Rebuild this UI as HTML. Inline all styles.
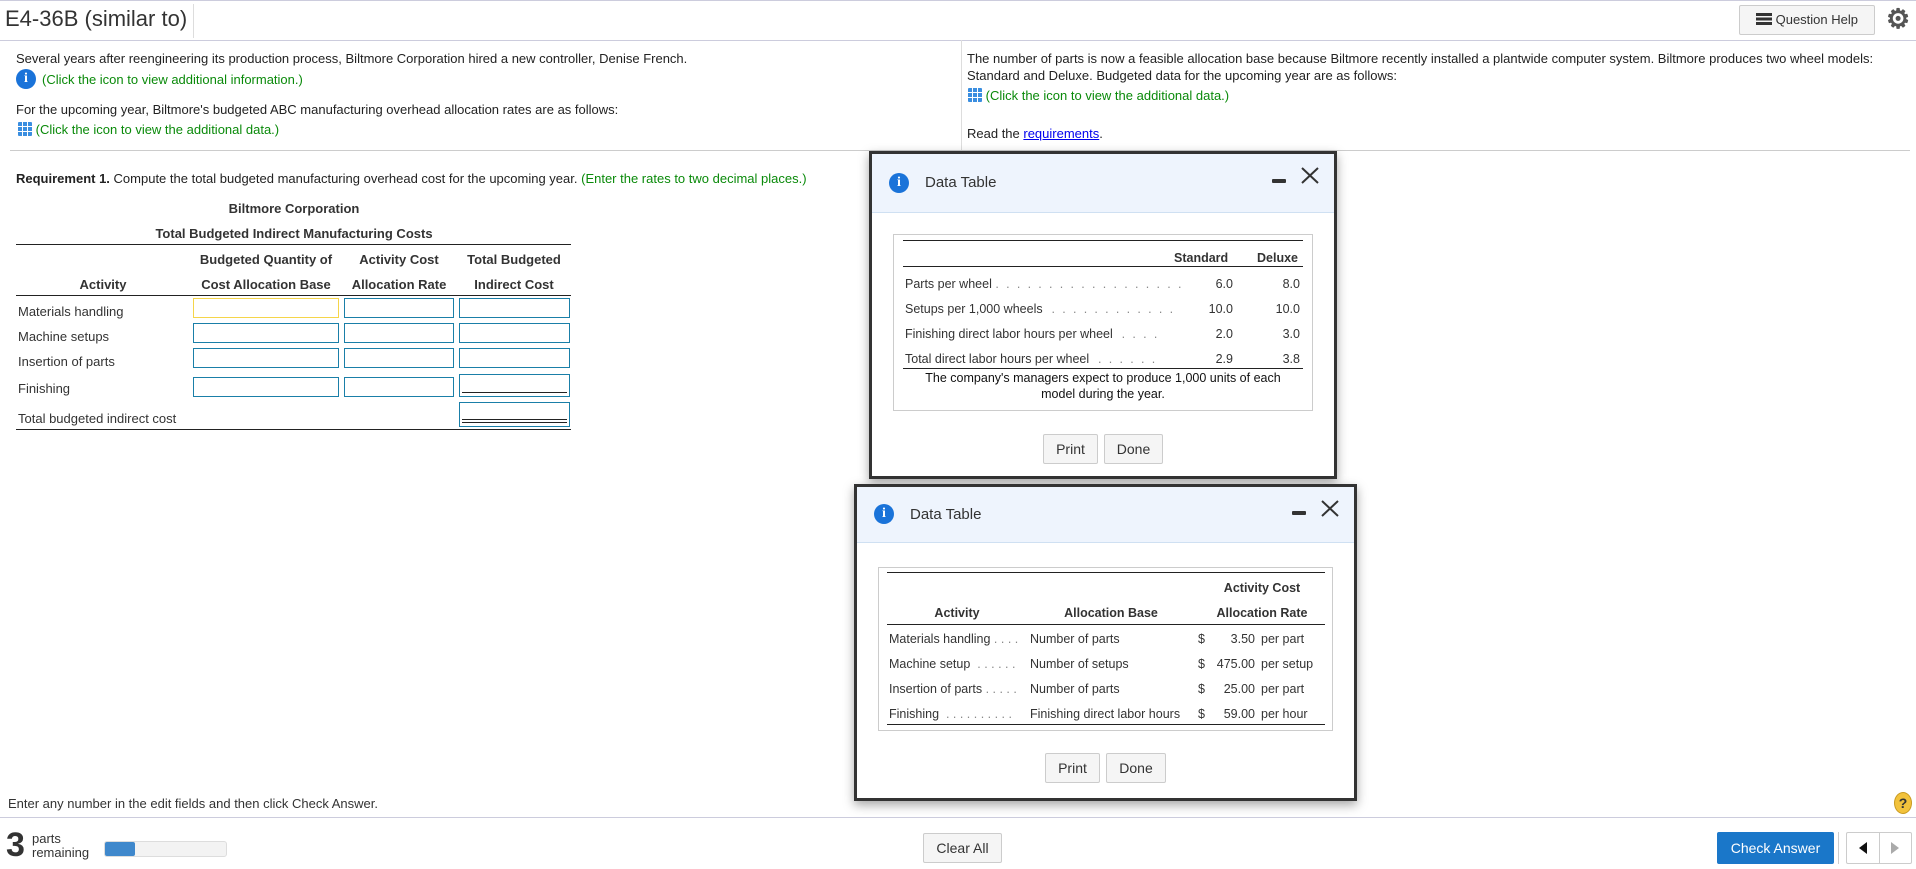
<!DOCTYPE html>
<html><head><meta charset="utf-8"><style>
*{box-sizing:border-box;margin:0;padding:0}
body{width:1916px;height:869px;position:relative;overflow:hidden;background:#fff;font-family:"Liberation Sans",Arial,sans-serif;color:#222;font-size:13px}
.a{position:absolute;white-space:nowrap}
.g{color:#0a8a0a}
.ln{position:absolute;height:1px;background:#222}
.inp{position:absolute;border:1px solid #1a7fa8;background:#fff;height:20px}
.hd{font-weight:bold;color:#333;transform:translateX(-50%)}
.dlg{position:absolute;background:#fff;border:3px solid #333;box-shadow:0 4px 10px rgba(0,0,0,.35)}
.dh{position:absolute;left:0;right:0;top:0;background:#eef4fd;border-bottom:1px solid #cfe0f2}
.ic{position:absolute;width:20px;height:20px;border-radius:50%;background:#1a73d9;color:#fff;font:bold 14px "Liberation Serif",serif;text-align:center;line-height:20px}
.btn{position:absolute;border:1px solid #ccc;border-radius:2px;background:#f5f5f5;font-size:14px;color:#333;text-align:center;line-height:28px}
.grid{display:inline-block;width:14px;height:14px;background:#3a8ee0;border-radius:1px;vertical-align:-2px;
background-image:linear-gradient(90deg,transparent 4px,#fff 4px,#fff 5px,transparent 5px,transparent 9px,#fff 9px,#fff 10px,transparent 10px),linear-gradient(0deg,transparent 4px,#fff 4px,#fff 5px,transparent 5px,transparent 9px,#fff 9px,#fff 10px,transparent 10px)}
.dt{font-size:12.5px;color:#333}
.x{position:absolute;width:18px;height:17px}
</style></head><body>
<div class="ln" style="left:0;right:0;top:0;background:#ccd;"></div>
<div class="a" style="left:5px;top:6px;font-size:22px;color:#333">E4-36B (similar to)</div>
<div style="position:absolute;left:193px;top:4px;width:1px;height:34px;background:#ddd"></div>
<div class="ln" style="left:0;right:0;top:40px;background:#ccd"></div>
<div class="btn" style="left:1739px;top:5px;width:136px;height:30px;font-size:13px">
<span style="display:inline-block;width:16px;height:12px;vertical-align:-1px;background:linear-gradient(#333 0 3px,transparent 3px 4.5px,#333 4.5px 7.5px,transparent 7.5px 9px,#333 9px 12px)"></span> Question Help</div>
<div class="a" style="left:1886px;top:4px;font-size:27px;color:#555;font-weight:bold">&#9881;</div>
<div class="a" style="left:16px;top:51px">Several years after reengineering its production process, Biltmore Corporation hired a new controller, Denise French.</div>
<div class="ic" style="left:16px;top:69px">i</div>
<div class="a g" style="left:42px;top:72px">(Click the icon to view additional information.)</div>
<div class="a" style="left:16px;top:102px">For the upcoming year, Biltmore's budgeted ABC manufacturing overhead allocation rates are as follows:</div>
<div class="a g" style="left:18px;top:122px"><span class="grid"></span> (Click the icon to view the additional data.)</div>
<div style="position:absolute;left:961px;top:40px;width:1px;height:110px;background:#ddd"></div>
<div class="a" style="left:967px;top:51px">The number of parts is now a feasible allocation base because Biltmore recently installed a plantwide computer system. Biltmore produces two wheel models:</div>
<div class="a" style="left:967px;top:68px">Standard and Deluxe. Budgeted data for the upcoming year are as follows:</div>
<div class="a g" style="left:968px;top:88px"><span class="grid"></span> (Click the icon to view the additional data.)</div>
<div class="a" style="left:967px;top:126px">Read the <span style="color:#00e;text-decoration:underline">requirements</span>.</div>
<div class="ln" style="left:10px;right:6px;top:150px;background:#ccc"></div>
<div class="a" style="left:16px;top:171px"><b>Requirement 1.</b> Compute the total budgeted manufacturing overhead cost for the upcoming year. <span class="g">(Enter the rates to two decimal places.)</span></div>
<div class="a hd" style="left:294px;top:201px">Biltmore Corporation</div>
<div class="a hd" style="left:294px;top:226px">Total Budgeted Indirect Manufacturing Costs</div>
<div class="ln" style="left:16px;width:555px;top:244px"></div>
<div class="a hd" style="left:266px;top:252px">Budgeted Quantity of</div>
<div class="a hd" style="left:399px;top:252px">Activity Cost</div>
<div class="a hd" style="left:514px;top:252px">Total Budgeted</div>
<div class="a hd" style="left:103px;top:277px">Activity</div>
<div class="a hd" style="left:266px;top:277px">Cost Allocation Base</div>
<div class="a hd" style="left:399px;top:277px">Allocation Rate</div>
<div class="a hd" style="left:514px;top:277px">Indirect Cost</div>
<div class="ln" style="left:16px;width:555px;top:295px"></div>
<div class="a" style="left:18px;top:304px;color:#333">Materials handling</div>
<div class="a" style="left:18px;top:329px;color:#333">Machine setups</div>
<div class="a" style="left:18px;top:354px;color:#333">Insertion of parts</div>
<div class="a" style="left:18px;top:381px;color:#333">Finishing</div>
<div class="a" style="left:18px;top:411px;color:#333">Total budgeted indirect cost</div>
<div class="inp" style="left:193px;top:298px;width:146px;border-color:#f5d54a"></div>
<div class="inp" style="left:344px;top:298px;width:110px"></div>
<div class="inp" style="left:459px;top:298px;width:111px"></div>
<div class="inp" style="left:193px;top:323px;width:146px"></div>
<div class="inp" style="left:344px;top:323px;width:110px"></div>
<div class="inp" style="left:459px;top:323px;width:111px"></div>
<div class="inp" style="left:193px;top:348px;width:146px"></div>
<div class="inp" style="left:344px;top:348px;width:110px"></div>
<div class="inp" style="left:459px;top:348px;width:111px"></div>
<div class="inp" style="left:193px;top:377px;width:146px"></div>
<div class="inp" style="left:344px;top:377px;width:110px"></div>
<div class="inp" style="left:459px;top:374px;width:111px;height:23px"><div class="ln" style="left:2px;right:2px;top:17px"></div></div>
<div class="inp" style="left:459px;top:402px;width:111px;height:25px"><div class="ln" style="left:2px;right:2px;top:16px"></div><div class="ln" style="left:2px;right:2px;top:19px"></div></div>
<div class="ln" style="left:16px;width:555px;top:429px"></div>
<div class="a" style="left:8px;top:796px;color:#333">Enter any number in the edit fields and then click Check Answer.</div>
<div style="position:absolute;left:1894px;top:792px;width:18px;height:22px;border-radius:50%;background:#f2c23c;border:1px solid #c99a20;text-align:center;font:bold 14px 'Liberation Sans';line-height:20px;color:#333">?</div>
<div class="ln" style="left:0;right:0;top:817px;background:#ccd"></div>
<div class="a" style="left:6px;top:826px;font-size:34px;font-weight:bold;color:#333">3</div>
<div class="a" style="left:32px;top:832px;font-size:13px;line-height:14px;color:#333">parts<br>remaining</div>
<div style="position:absolute;left:104px;top:841px;width:123px;height:16px;border:1px solid #ddd;border-radius:3px;background:#f3f3f3"><div style="width:30px;height:14px;background:#3f88cc;border-radius:2px"></div></div>
<div class="btn" style="left:923px;top:833px;width:79px;height:30px;font-size:14px">Clear All</div>
<div style="position:absolute;left:1717px;top:832px;width:117px;height:32px;background:#1a77c9;border-radius:2px;color:#fff;font-size:14px;text-align:center;line-height:32px">Check Answer</div>
<div style="position:absolute;left:1838px;top:832px;width:1px;height:32px;background:#ccc"></div>
<div style="position:absolute;left:1846px;top:832px;width:66px;height:32px;border:1px solid #ccc;border-radius:2px;background:#fff">
<div style="position:absolute;left:12px;top:9px;border:6px solid transparent;border-right:8px solid #111;border-left:0"></div>
<div style="position:absolute;left:32px;top:0;width:1px;height:30px;background:#ccc"></div>
<div style="position:absolute;left:44px;top:9px;border:6px solid transparent;border-left:8px solid #aaa;border-right:0"></div></div>
<div class="dlg" style="left:869px;top:151px;width:468px;height:328px">
<div class="dh" style="height:59px"></div>
<div class="ic" style="left:17px;top:19px">i</div>
<div class="a" style="left:53px;top:20px;font-size:15px;color:#333">Data Table</div>
<div style="position:absolute;left:400px;top:25px;width:14px;height:4px;background:#333;border-radius:1px"></div>
<svg class="x" style="left:429px;top:13px" viewBox="0 0 18 17"><path d="M1 1L17 16M17 1L1 16" stroke="#333" stroke-width="2" fill="none"/></svg>
<div style="position:absolute;left:21px;top:80px;width:420px;height:177px;border:1px solid #ccc"></div>
<div class="dt">
<div class="ln" style="left:31px;width:400px;top:86px"></div>
<div class="a" style="left:302px;top:97px;font-weight:bold">Standard</div>
<div class="a" style="left:385px;top:97px;font-weight:bold">Deluxe</div>
<div class="ln" style="left:31px;width:400px;top:112px"></div>
<div class="a" style="left:33px;top:123px">Parts per wheel <span style="color:#888;letter-spacing:1.9px">. . . . . . . . . . . . . . . . . .</span></div>
<div class="a" style="left:33px;top:148px">Setups per 1,000 wheels <span style="color:#888;letter-spacing:1.9px">&nbsp;. . . . . . . . . . . .</span></div>
<div class="a" style="left:33px;top:173px">Finishing direct labor hours per wheel <span style="color:#888;letter-spacing:1.9px">&nbsp;. . . .</span></div>
<div class="a" style="left:33px;top:198px">Total direct labor hours per wheel <span style="color:#888;letter-spacing:1.9px">&nbsp;. . . . . .</span></div>
<div class="a" style="right:101px;top:123px">6.0</div><div class="a" style="right:34px;top:123px">8.0</div>
<div class="a" style="right:101px;top:148px">10.0</div><div class="a" style="right:34px;top:148px">10.0</div>
<div class="a" style="right:101px;top:173px">2.0</div><div class="a" style="right:34px;top:173px">3.0</div>
<div class="a" style="right:101px;top:198px">2.9</div><div class="a" style="right:34px;top:198px">3.8</div>
<div class="ln" style="left:31px;width:400px;top:214px"></div>
<div style="position:absolute;left:31px;width:400px;top:216px;text-align:center;color:#111;line-height:16px">The company's managers expect to produce 1,000 units of each<br>model during the year.</div>
</div>
<div class="btn" style="left:171px;top:280px;width:55px;height:30px">Print</div>
<div class="btn" style="left:232px;top:280px;width:59px;height:30px">Done</div>
</div>
<div class="dlg" style="left:854px;top:484px;width:503px;height:317px">
<div class="dh" style="height:56px"></div>
<div class="ic" style="left:17px;top:17px">i</div>
<div class="a" style="left:53px;top:19px;font-size:15px;color:#333">Data Table</div>
<div style="position:absolute;left:435px;top:24px;width:14px;height:4px;background:#333;border-radius:1px"></div>
<svg class="x" style="left:464px;top:13px" viewBox="0 0 18 17"><path d="M1 1L17 16M17 1L1 16" stroke="#333" stroke-width="2" fill="none"/></svg>
<div style="position:absolute;left:21px;top:80px;width:455px;height:164px;border:1px solid #ccc"></div>
<div class="dt">
<div class="ln" style="left:30px;width:438px;top:85px"></div>
<div class="a hd" style="left:405px;top:94px">Activity Cost</div>
<div class="a hd" style="left:100px;top:119px">Activity</div>
<div class="a hd" style="left:254px;top:119px">Allocation Base</div>
<div class="a hd" style="left:405px;top:119px">Allocation Rate</div>
<div class="ln" style="left:30px;width:438px;top:137px"></div>
<div class="a" style="left:32px;top:145px">Materials handling <span style="color:#888">. . . .</span></div>
<div class="a" style="left:32px;top:170px">Machine setup <span style="color:#888">&nbsp;. . . . . .</span></div>
<div class="a" style="left:32px;top:195px">Insertion of parts <span style="color:#888">. . . . .</span></div>
<div class="a" style="left:32px;top:220px">Finishing <span style="color:#888">&nbsp;. . . . . . . . . .</span></div>
<div class="a" style="left:173px;top:145px">Number of parts</div>
<div class="a" style="left:173px;top:170px">Number of setups</div>
<div class="a" style="left:173px;top:195px">Number of parts</div>
<div class="a" style="left:173px;top:220px">Finishing direct labor hours</div>
<div class="a" style="left:341px;top:145px">$</div><div class="a" style="left:341px;top:170px">$</div><div class="a" style="left:341px;top:195px">$</div><div class="a" style="left:341px;top:220px">$</div>
<div class="a" style="right:99px;top:145px">3.50</div><div class="a" style="left:404px;top:145px">per part</div>
<div class="a" style="right:99px;top:170px">475.00</div><div class="a" style="left:404px;top:170px">per setup</div>
<div class="a" style="right:99px;top:195px">25.00</div><div class="a" style="left:404px;top:195px">per part</div>
<div class="a" style="right:99px;top:220px">59.00</div><div class="a" style="left:404px;top:220px">per hour</div>
<div class="ln" style="left:30px;width:438px;top:237px"></div>
</div>
<div class="btn" style="left:188px;top:266px;width:55px;height:30px">Print</div>
<div class="btn" style="left:249px;top:266px;width:60px;height:30px">Done</div>
</div>
</body></html>
